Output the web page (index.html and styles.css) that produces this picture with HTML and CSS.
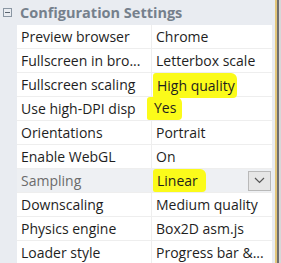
FILE: index.html
```html
<!DOCTYPE html>
<html lang="en">
<head>
  <meta charset="UTF-8" />
  <title>Configuration Settings</title>
  <link rel="stylesheet" href="styles.css">
</head>
<body>
  <div class="panel">
    <div class="grid">
      <div class="group">
        <span class="toggle"></span>
        <span class="group-title">Configuration Settings</span>
      </div>

      <div class="row"><div class="name">Preview browser</div><div class="value">Chrome</div></div>
      <div class="row"><div class="name">Fullscreen in bro...</div><div class="value">Letterbox scale</div></div>
      <div class="row"><div class="name">Fullscreen scaling</div><div class="value"><span class="hl hl-a">High quality</span></div></div>
      <div class="row"><div class="name">Use high-DPI disp</div><div class="value"><span class="hl hl-b">Yes</span></div></div>
      <div class="row"><div class="name">Orientations</div><div class="value">Portrait</div></div>
      <div class="row"><div class="name">Enable WebGL</div><div class="value">On</div></div>
      <div class="row selected">
        <div class="name">Sampling</div>
        <div class="value">
          <span class="hl hl-c">Linear</span>
          <span class="drop">
            <svg width="11" height="7" viewBox="0 0 11 7"><path d="M1 1 L5.5 5.5 L10 1" fill="none" stroke="#555" stroke-width="1.2"/></svg>
          </span>
        </div>
      </div>
      <div class="row"><div class="name">Downscaling</div><div class="value">Medium quality</div></div>
      <div class="row"><div class="name">Physics engine</div><div class="value">Box2D asm.js</div></div>
      <div class="row"><div class="name">Loader style</div><div class="value">Progress bar &amp;...</div></div>
    </div>
    <div class="edge"></div>
  </div>
</body>
</html>
```

FILE: styles.css
```css
* {
  box-sizing: border-box;
}

body {
  margin: 0;
  font-family: 'Open Sans', sans-serif;
  font-size: 14px;
  color: #1e1e1e;
  background: #e9ecf1;
}

.panel {
  display: flex;
  height: 263px;
  overflow: hidden;
}

.grid {
  flex: 1;
  background: #e9ecf1;
}

.group {
  display: flex;
  align-items: center;
  height: 25px;
  padding-left: 3px;
}

.toggle {
  width: 9px;
  height: 9px;
  border: 1px solid #8a96a3;
  position: relative;
  margin-right: 8px;
}

.toggle::after {
  content: "";
  position: absolute;
  left: 1px;
  top: 3px;
  width: 5px;
  height: 1px;
  background: #5a6470;
}

.group-title {
  font-weight: bold;
  color: #75808c;
  font-size: 14.5px;
}

.row {
  display: grid;
  grid-template-columns: 135px 1fr;
  height: 24px;
  margin-left: 17px;
  margin-right: 3px;
  background: #fff;
  border-bottom: 1px solid #eeeeee;
}

.name {
  padding-left: 4px;
  line-height: 23px;
  white-space: nowrap;
  overflow: hidden;
  border-right: 1px solid #eeeeee;
}

.value {
  display: flex;
  align-items: center;
  padding-left: 4px;
  white-space: nowrap;
}

.selected {
  background: #eef0f3;
}

.selected .name {
  color: #6b6b6b;
}

.hl {
  background: #fbfb1a;
  border-radius: 3px 6px 4px 2px;
}

.hl-a {
  padding: 3px 2px 3px 4px;
  margin-left: -3px;
}

.hl-b {
  padding: 1px 6px 3px 7px;
  margin-left: -9px;
}

.hl-c {
  padding: 2px 8px 2px 4px;
  margin-left: -3px;
}

.drop {
  margin-left: auto;
  width: 23px;
  height: 20px;
  border: 1px solid #b9b9b9;
  background: #e6e6e6;
  display: flex;
  align-items: center;
  justify-content: center;
  margin-right: 1px;
}

.edge {
  width: 6px;
  background: linear-gradient(to right, #e3c67a 0, #e3c67a 2px, #6f6f6f 2px, #6f6f6f 4px, #d7d7d7 4px);
}
```
